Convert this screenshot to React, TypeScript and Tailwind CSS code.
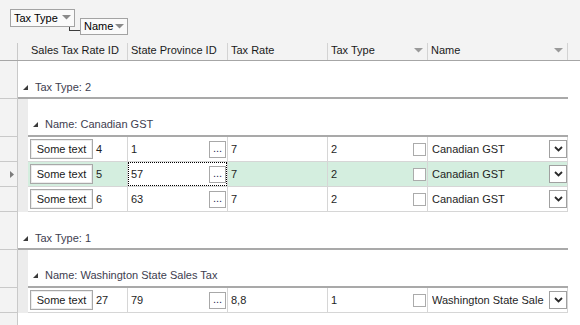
import React from "react";

const GroupGlyph = () => (
  <svg width="5" height="5" viewBox="0 0 5 5" className="shrink-0">
    <polygon points="5,0 5,5 0,5" fill="#3a3a3a" />
  </svg>
);

const DownArrow = ({ color = "#9a9a9a" }: { color?: string }) => (
  <svg width="9" height="5" viewBox="0 0 9 5" className="shrink-0">
    <polygon points="0,0 9,0 4.5,4.5" fill={color} />
  </svg>
);

const Indicator = ({ current = false, border = true }: { current?: boolean; border?: boolean }) => (
  <div
    className={
      "w-[18px] shrink-0 bg-[#f3f3f3] border-r border-[#c9c9c9] flex items-center pl-[10px] " +
      (border ? "border-b" : "")
    }
  >
    {current && (
      <svg width="4" height="7" viewBox="0 0 4 7">
        <polygon points="0,0 4,3.5 0,7" fill="#7c7c7c" />
      </svg>
    )}
  </div>
);

const GroupL1 = ({ text }: { text: string }) => (
  <div className="flex h-[38px] shrink-0">
    <Indicator />
    <div className="w-[550px] border-b-2 border-[#a9a9a9] flex items-center pt-[16px] pl-[5px] gap-[7px] text-[#3d3d4f]">
      <GroupGlyph />
      <span>{text}</span>
    </div>
    <div className="flex-1" />
  </div>
);

const GroupL2 = ({ text }: { text: string }) => (
  <div className="flex h-[38px] shrink-0">
    <Indicator />
    <div className="w-[10px] bg-[#ececec] shrink-0" />
    <div className="w-[540px] border-b-2 border-[#a9a9a9] flex items-center pt-[14px] pl-[5px] gap-[7px] text-[#3d3d4f]">
      <GroupGlyph />
      <span>{text}</span>
    </div>
    <div className="flex-1" />
  </div>
);

type Row = { id: string; sp: string; rate: string; type: string; name: string };

const DataRow = ({ r, selected = false }: { r: Row; selected?: boolean }) => {
  const bg = selected ? "bg-[#d4eedf]" : "bg-white";
  const cell = "h-full border-r border-b border-[#d6d6d6] flex items-center shrink-0";
  return (
    <div className="flex h-[25px] shrink-0">
      <Indicator current={selected} />
      <div className="w-[10px] bg-[#ececec] shrink-0" />
      <div className={`${cell} ${bg} w-[100px] pl-[2px]`}>
        <div className="w-[63px] h-[20px] bg-white border border-[#a8a8a8] shadow-[inset_0_0_0_1px_#ececec] flex items-center justify-center text-[#1a1a1a]">
          Some text
        </div>
        <span className="ml-[3px]">{r.id}</span>
      </div>
      {selected ? (
        <div className={`${cell} bg-white w-[100px]`}>
          <div className="w-full h-full border border-dotted border-black flex items-center pl-[2px]">
            <span>{r.sp}</span>
            <div className="ml-auto w-[17px] h-[17px] bg-white border border-[#a8a8a8] flex items-end justify-center pb-[3px] text-[#2a2a55] leading-none">
              ...
            </div>
          </div>
        </div>
      ) : (
        <div className={`${cell} bg-white w-[100px] pl-[3px] pr-[1px]`}>
          <span>{r.sp}</span>
          <div className="ml-auto w-[17px] h-[17px] bg-white border border-[#a8a8a8] flex items-end justify-center pb-[3px] text-[#2a2a55] leading-none">
            ...
          </div>
        </div>
      )}
      <div className={`${cell} ${bg} w-[100px] pl-[3px]`}>
        <span>{r.rate}</span>
      </div>
      <div className={`${cell} ${bg} w-[100px] pl-[3px] pr-[1px]`}>
        <span>{r.type}</span>
        <div className="ml-auto w-[13px] h-[13px] bg-white border border-[#ababab]" />
      </div>
      <div className={`${cell} ${bg} w-[140px] pl-[4px]`}>
        <span className="whitespace-nowrap overflow-hidden">{r.name}</span>
        <div className="ml-auto w-[18px] h-[18px] bg-white border border-[#a0a0a0] flex items-center justify-center shrink-0">
          <svg width="9" height="6" viewBox="0 0 9 6">
            <path d="M1 1 L4.5 4.5 L8 1" fill="none" stroke="#2a2a2a" strokeWidth="1.8" />
          </svg>
        </div>
      </div>
      <div className="flex-1" />
    </div>
  );
};

const HeaderCell = ({ w, text, arrow = false }: { w: string; text: string; arrow?: boolean }) => (
  <div className={`flex h-full shrink-0 ${w}`}>
    <div className="flex-1 flex items-center pl-[3px] pr-[4px]">
      <span className="whitespace-nowrap">{text}</span>
      {arrow && (
        <div className="ml-auto">
          <DownArrow />
        </div>
      )}
    </div>
    <div className="w-px mt-[3px] bg-[#d3d3d3]" />
  </div>
);

export default function App() {
  const canadian: Row[] = [
    { id: "4", sp: "1", rate: "7", type: "2", name: "Canadian GST" },
    { id: "5", sp: "57", rate: "7", type: "2", name: "Canadian GST" },
    { id: "6", sp: "63", rate: "7", type: "2", name: "Canadian GST" },
  ];
  const wa: Row = { id: "27", sp: "79", rate: "8,8", type: "1", name: "Washington State Sale" };

  return (
    <div className="w-[580px] h-[325px] overflow-hidden bg-white flex flex-col font-['Liberation_Sans',Arial,sans-serif] text-[11px] text-[#1e1e1e] leading-[13px]">
      {/* group-by panel */}
      <div className="h-[40px] shrink-0 bg-[#f3f3f3] flex items-start pl-[10px] pt-[9px]">
        <div className="w-[65px] h-[18px] border border-[#a3a3a3] bg-[#fafafa] flex items-center pl-[3px] pr-[3px] text-black">
          <span>Tax Type</span>
          <div className="ml-auto mb-[2px]">
            <DownArrow color="#8a8a8a" />
          </div>
        </div>
        <div className="-ml-[6px] mt-[18px] w-[11px] h-[4px] border-l border-b border-[#3c3c3c]" />
        <div className="mt-[9px] w-[48px] h-[17px] border border-[#a3a3a3] bg-[#fafafa] flex items-center pl-[3px] pr-[3px] text-black">
          <span>Name</span>
          <div className="ml-auto">
            <DownArrow color="#8a8a8a" />
          </div>
        </div>
      </div>

      {/* header */}
      <div className="h-[21px] shrink-0 bg-[#f3f3f3] border-b border-[#a6a6a6] flex text-[#1a1a1a]">
        <div className="w-[17px] shrink-0" />
        <div className="w-px mt-[3px] bg-[#c9c9c9]" />
        <div className="w-[10px] shrink-0" />
        <HeaderCell w="w-[100px]" text="Sales Tax Rate ID" />
        <HeaderCell w="w-[100px]" text="State Province ID" />
        <HeaderCell w="w-[100px]" text="Tax Rate" />
        <HeaderCell w="w-[100px]" text="Tax Type" arrow />
        <HeaderCell w="w-[140px]" text="Name" arrow />
        <div className="flex-1" />
      </div>

      {/* body */}
      <GroupL1 text="Tax Type: 2" />
      <GroupL2 text="Name: Canadian GST" />
      {canadian.map((r, i) => (
        <DataRow key={r.id} r={r} selected={i === 1} />
      ))}
      <GroupL1 text="Tax Type: 1" />
      <GroupL2 text="Name: Washington State Sales Tax" />
      <DataRow r={wa} />
      <div className="flex flex-1">
        <Indicator border={false} />
        <div className="flex-1" />
      </div>
    </div>
  );
}
